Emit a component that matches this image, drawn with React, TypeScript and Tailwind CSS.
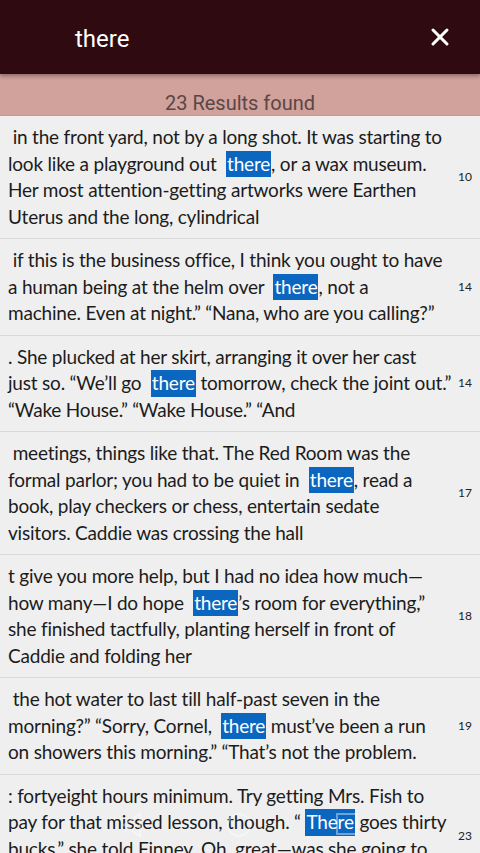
import { X } from "lucide-react";

type Result = { lines: (string | [string, string, string])[]; page: number };

const results: Result[] = [
  {
    lines: [
      " in the front yard, not by a long shot. It was starting to",
      ["look like a playground out  ", "there", ", or a wax museum."],
      "Her most attention-getting artworks were Earthen",
      "Uterus and the long, cylindrical",
    ],
    page: 10,
  },
  {
    lines: [
      " if this is the business office, I think you ought to have",
      ["a human being at the helm over  ", "there", ", not a"],
      "machine. Even at night.\u201D \u201CNana, who are you calling?\u201D",
    ],
    page: 14,
  },
  {
    lines: [
      ". She plucked at her skirt, arranging it over her cast",
      ["just so. \u201CWe\u2019ll go  ", "there", " tomorrow, check the joint out.\u201D"],
      "\u201CWake House.\u201D \u201CWake House.\u201D \u201CAnd",
    ],
    page: 14,
  },
  {
    lines: [
      " meetings, things like that. The Red Room was the",
      ["formal parlor; you had to be quiet in  ", "there", ", read a"],
      "book, play checkers or chess, entertain sedate",
      "visitors. Caddie was crossing the hall",
    ],
    page: 17,
  },
  {
    lines: [
      "t give you more help, but I had no idea how much\u2014",
      ["how many\u2014I do hope  ", "there", "\u2019s room for everything,\u201D"],
      "she finished tactfully, planting herself in front of",
      "Caddie and folding her",
    ],
    page: 18,
  },
  {
    lines: [
      " the hot water to last till half-past seven in the",
      ["morning?\u201D \u201CSorry, Cornel,  ", "there", " must\u2019ve been a run"],
      "on showers this morning.\u201D \u201CThat\u2019s not the problem.",
    ],
    page: 19,
  },
  {
    lines: [
      ": fortyeight hours minimum. Try getting Mrs. Fish to",
      ["pay for that missed lesson, though. \u201C ", "There", " goes thirty"],
      "bucks,\u201D she told Finney. Oh, great\u2014was she going to",
      "have to",
    ],
    page: 23,
  },
];

function Row({ r }: { r: Result }) {
  return (
    <div className="flex border-b border-[#d9d9d9] py-2">
      <div className="min-w-0 flex-1 whitespace-pre pl-2 text-[19px] leading-[26.5px] tracking-[-0.2px] text-[#1c1c1c]">
        {r.lines.map((l, i) =>
          typeof l === "string" ? (
            <div key={i}>{l}</div>
          ) : (
            <div key={i}>
              {l[0]}
              <span className="inline-block bg-[#0b66c0] px-px text-white">{l[1]}</span>
              {l[2]}
            </div>
          )
        )}
      </div>
      <div className="w-[30px] shrink-0 self-center text-center text-[12px] text-[#222]">{r.page}</div>
    </div>
  );
}

export default function App() {
  return (
    <div className="relative h-[853px] w-[480px] overflow-hidden bg-[#efefef]" style={{ fontFamily: "Lato, sans-serif" }}>
      <div className="relative z-10 flex h-[74px] items-center justify-between bg-[#2f0a10] pl-[75px] pr-[26px] shadow-[0_2px_4px_rgba(0,0,0,0.35)]">
        <span className="pt-[3px] text-[24px] text-white" style={{ fontFamily: "Roboto, sans-serif" }}>there</span>
        <X className="h-[28px] w-[28px] text-white" strokeWidth={2.6} />
      </div>
      <div className="h-[42px] border-b border-[#c99691] bg-[#d1a19b] pt-[17px] text-center text-[20px] leading-[24px] text-[#5b4646]" style={{ fontFamily: "Roboto, sans-serif" }}>
        23 Results found
      </div>
      {results.map((r, i) => (
        <Row key={i} r={r} />
      ))}
      <div className="pointer-events-none absolute bottom-[14px] left-0 flex w-full justify-around px-[80px] opacity-40">
        <svg width="24" height="28" viewBox="0 0 24 28" fill="none" stroke="white" strokeWidth="2">
          <path d="M20 3 L4 14 L20 25 Z" />
        </svg>
        <svg width="28" height="28" viewBox="0 0 28 28" fill="none" stroke="white" strokeWidth="2">
          <circle cx="14" cy="14" r="11" />
        </svg>
        <svg width="26" height="26" viewBox="0 0 26 26" fill="none" stroke="white" strokeWidth="2">
          <rect x="3" y="3" width="20" height="20" />
        </svg>
      </div>
    </div>
  );
}
